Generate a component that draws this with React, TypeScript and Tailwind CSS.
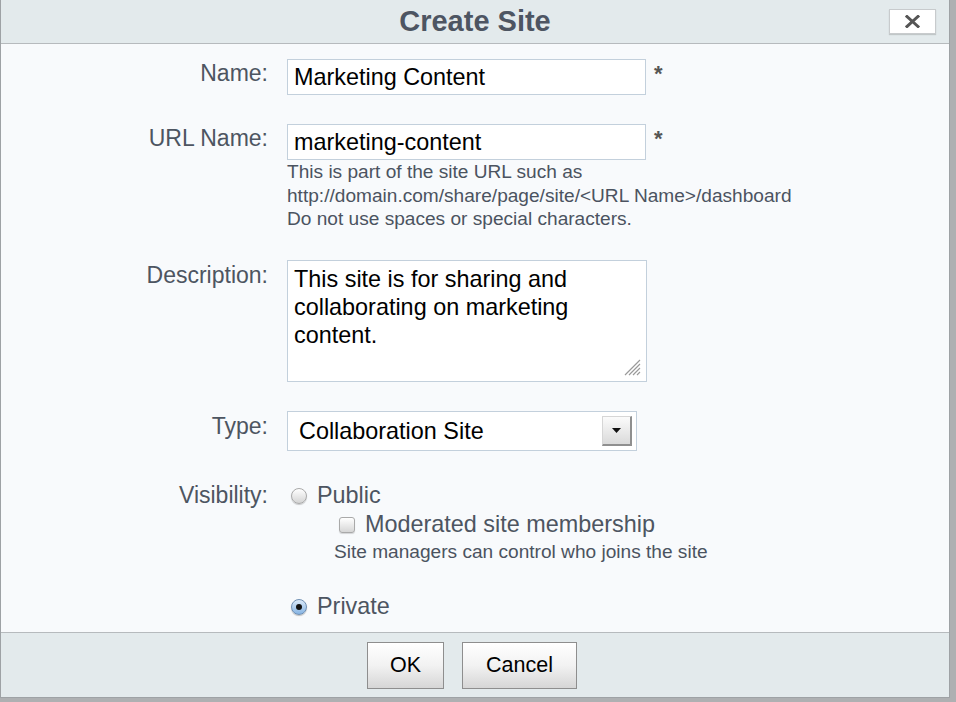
import React from "react";

function Radio({ checked }: { checked?: boolean }) {
  return checked ? (
    <span className="inline-flex items-center justify-center w-[16px] h-[16px] rounded-full border border-[#6f8fb3] bg-gradient-to-b from-[#dbe9f8] to-[#86b4e3] shadow-[0_1px_1px_rgba(0,0,0,0.25)]">
      <span className="block w-[6px] h-[6px] rounded-full bg-[#111]" />
    </span>
  ) : (
    <span className="inline-block w-[16px] h-[16px] rounded-full border border-[#a9a9a9] bg-gradient-to-b from-[#ffffff] to-[#d4d4d4] shadow-[0_1px_1px_rgba(0,0,0,0.2)]" />
  );
}

export default function App() {
  return (
    <div className="w-[956px] h-[702px] overflow-hidden bg-[#aeb0b2] font-['Liberation_Sans',Arial,sans-serif]">
      <div className="w-[950px] h-[698px] flex flex-col border-l border-r border-b border-[#9ea2a5] bg-[#f8fafc]">
        {/* Header */}
        <div className="relative h-[44px] shrink-0 flex items-center justify-center bg-[#e3eaec] border-b border-[#b6babd]">
          <span className="text-[29px] font-bold text-[#4d5562] leading-none">Create Site</span>
          <button className="absolute right-[13px] top-[9px] w-[47px] h-[25px] flex items-center justify-center bg-white border border-[#c8cbcd] shadow-[0_1px_1px_rgba(0,0,0,0.15)]">
            <svg width="15" height="13" viewBox="0 0 15 13">
              <path d="M2 1.5 L13 11.5 M13 1.5 L2 11.5" stroke="#555" strokeWidth="3" strokeLinecap="square" />
            </svg>
          </button>
        </div>

        {/* Body */}
        <div className="flex-1 pt-[15px] text-[#4d5561]">
          {/* Name */}
          <div className="flex">
            <div className="w-[267px] text-right text-[23px] leading-[29px]">Name:</div>
            <div className="ml-[19px] flex items-start">
              <div className="w-[359px] h-[36px] bg-white border border-[#c3d0dc] flex items-center pl-[6px] pt-[2px] text-[23.4px] text-black">
                Marketing Content
              </div>
              <span className="ml-[8px] -mt-[2px] text-[22px] font-bold text-[#555]">*</span>
            </div>
          </div>

          {/* URL Name */}
          <div className="flex mt-[29px]">
            <div className="w-[267px] text-right text-[23px] leading-[29px]">URL Name:</div>
            <div className="ml-[19px] flex flex-col">
              <div className="flex items-start">
                <div className="w-[359px] h-[36px] bg-white border border-[#c3d0dc] flex items-center pl-[6px] pt-[2px] text-[23.4px] text-black">
                  marketing-content
                </div>
                <span className="ml-[8px] -mt-[2px] text-[22px] font-bold text-[#555]">*</span>
              </div>
              <div className="text-[19.1px] leading-[23.5px] text-[#4b5360]">
                <div>This is part of the site URL such as</div>
                <div>http://domain.com/share/page/site/&lt;URL Name&gt;/dashboard</div>
                <div>Do not use spaces or special characters.</div>
              </div>
            </div>
          </div>

          {/* Description */}
          <div className="flex mt-[29px]">
            <div className="w-[267px] text-right text-[23px] leading-[30px]">Description:</div>
            <div className="ml-[19px] relative w-[360px] h-[122px] bg-white border border-[#c3d0dc] pl-[6px] pt-[4px] text-[23.4px] leading-[28px] text-black">
              <div>This site is for sharing and</div>
              <div>collaborating on marketing</div>
              <div>content.</div>
              <svg className="absolute right-[5px] bottom-[5px]" width="18" height="18" viewBox="0 0 18 18">
                <path d="M17 2 L2 17 M17 6 L6 17 M17 10 L10 17 M17 14 L14 17" stroke="#9a9a9a" strokeWidth="1.2" />
              </svg>
            </div>
          </div>

          {/* Type */}
          <div className="flex mt-[29px]">
            <div className="w-[267px] text-right text-[23px] leading-[30px]">Type:</div>
            <div className="ml-[19px] w-[350px] h-[40px] bg-white border border-[#c3d0dc] flex items-center justify-between pl-[11px] pr-[4px] text-[23.4px] text-black">
              <span className="mt-[2px]">Collaboration Site</span>
              <span className="w-[30px] h-[30px] flex items-center justify-center bg-gradient-to-b from-[#fbfbfb] to-[#dadada] border-t border-l border-[#d6d6d6] border-r-2 border-b-2 border-r-[#8f8f8f] border-b-[#8f8f8f]">
                <svg width="9" height="5" viewBox="0 0 9 5">
                  <path d="M0 0 L9 0 L4.5 5 Z" fill="#111" />
                </svg>
              </span>
            </div>
          </div>

          {/* Visibility */}
          <div className="flex mt-[29px]">
            <div className="w-[267px] text-right text-[23px] leading-[30px]">Visibility:</div>
            <div className="ml-[23px] pt-[2px] flex flex-col">
              <div className="flex items-center h-[29px] gap-[10px] text-[23.4px]">
                <Radio />
                <span>Public</span>
              </div>
              <div className="flex items-center h-[28px] gap-[10px] ml-[48px] text-[23.4px]">
                <span className="inline-block w-[16px] h-[16px] rounded-[3px] border border-[#a9a9a9] bg-gradient-to-b from-[#ffffff] to-[#d6d6d6] shadow-[0_1px_1px_rgba(0,0,0,0.15)]" />
                <span>Moderated site membership</span>
              </div>
              <div className="ml-[43px] mt-[1px] text-[19.1px] leading-[23px] text-[#4b5360]">
                Site managers can control who joins the site
              </div>
              <div className="flex items-center h-[30px] mt-[29px] gap-[10px] text-[23.4px]">
                <Radio checked />
                <span>Private</span>
              </div>
            </div>
          </div>
        </div>

        {/* Footer */}
        <div className="h-[65px] shrink-0 bg-[#e3eaec] border-t border-[#b6babd] flex justify-center items-start pt-[9px] gap-[18px] pr-[6px]">
          <button className="w-[77px] h-[47px] bg-gradient-to-b from-[#ffffff] via-[#f2f2f2] to-[#d6d6d6] border border-[#8e8e8e] text-[21.5px] text-black">
            OK
          </button>
          <button className="w-[115px] h-[47px] bg-gradient-to-b from-[#ffffff] via-[#f2f2f2] to-[#d6d6d6] border border-[#8e8e8e] text-[21.5px] text-black">
            Cancel
          </button>
        </div>
      </div>
    </div>
  );
}
